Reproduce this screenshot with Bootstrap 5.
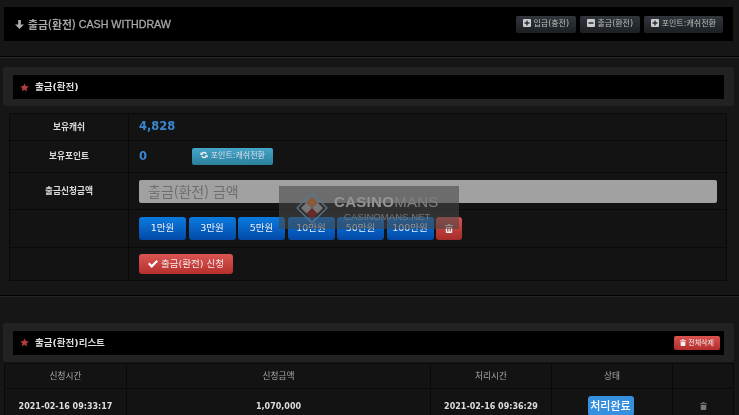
<!DOCTYPE html>
<html lang="ko">
<head>
<meta charset="utf-8">
<title>출금</title>
<link href="https://cdn.jsdelivr.net/npm/bootstrap@5.3.0/dist/css/bootstrap.min.css" rel="stylesheet">
<style>
html,body{height:415px;overflow:hidden}
body{background:#161616;color:#ddd;font-family:"DejaVu Sans","Noto Sans CJK KR",sans-serif;font-size:8px;font-weight:700;line-height:1.2}
.stage{position:relative;height:415px;overflow:hidden;padding-top:7px;filter:blur(.35px)}
.topbar{height:34px;margin:0 6px 0 4px;background:#000;color:#aaa;padding:0 10px 0 11px}
.toptitle{color:#a8a8a8}
.toptitle .ko{font:700 10.8px "Noto Sans CJK KR",sans-serif}
.toptitle .en{font:400 10.7px "Liberation Sans",sans-serif;-webkit-text-stroke:.3px #a8a8a8}
.gbtn{height:17px;padding:0;font-size:8px;color:#bdbdbd;border:0;border-radius:2px;background:linear-gradient(#30363c,#1c2024);white-space:nowrap}
.gw60{width:60px}.gw79{width:79px}
.rule1{height:2px;background:#000;margin-top:15px;border-bottom:1px solid #2a2a2a}
.panel{background:#222;border-radius:3px;padding:8px 10px;height:39px;margin:0 5px 0 3px}
.panelbar{background:#000;height:24px;padding:0 4px 0 7px;color:#ddd;font-size:9.5px}
.titlegap{gap:6px}
.mt-first{margin-top:9px}
.tbl1{width:718px;margin:7px 0 0 9px;border-collapse:collapse;background:#131313}
.tbl1 td{border:1px solid #0a0a0a;padding:0 0 0 10px;vertical-align:middle}
.tbl1 td:first-child{width:119px;padding:0;text-align:center;color:#ddd;font-size:8.7px}
.r1{height:27px}.r2{height:32px}.r3{height:37px}.r4{height:38px}.r5{height:33px}
.amt{color:#3a86cf;font-size:11.5px}
.refbtn{height:17px;width:81px;margin:-1px 0 0 45px;padding:0;color:#dde;font-size:8px;border:0;border-radius:2px;background:linear-gradient(#45a6c8,#2b7f9c)}
.amtinput{display:block;width:578px;height:23px;background:#a1a1a1;border:0;border-radius:2px;padding:0 9px;font:14px "Noto Sans CJK KR",sans-serif}
.amtinput::placeholder{color:#6e6e6e;opacity:1}
.mbtns{gap:2.5px}
.mbtn{width:47px;height:23px;padding:0;color:#f0f0f0;font-size:9.5px;font-weight:400;border:0;border-radius:3px;background:linear-gradient(#0b7be0,#0349a8)}
.tbtn{width:26px;height:23px;padding:0;border:0;border-radius:3px;background:linear-gradient(#d9534f,#a52c2a);color:#eee}
.rbtn{height:20px;width:94px;padding:0;color:#eee;font-size:9.5px;font-weight:400;border:0;border-radius:3px;background:linear-gradient(#dc5552,#b5302d)}
.rule2{height:2px;background:#000;margin-top:14px;border-bottom:1px solid #252525}
.panel2{margin-top:26px}
.delbtn{width:46px;height:14px;padding:0;color:#eee;font-size:7px;border:0;border-radius:2px;background:linear-gradient(#d9534f,#b52d2b)}
.tbl2{width:729px;margin:1px 0 0 4px;border-collapse:collapse;table-layout:fixed;background:#131313;text-align:center}
.tbl2 th,.tbl2 td{border:1px solid #0a0a0a;padding:0;vertical-align:middle}
.tbl2 th{height:25px;color:#aaa;font-size:8.7px;font-weight:400}
.tbl2 td{height:36px;color:#ddd;font-size:8px}
.cellbox{height:35px}
.donebadge{width:46px;height:20px;line-height:19px;background:#378fe0;color:#fff;font-size:11px;font-weight:500;font-family:"Noto Sans CJK KR",sans-serif;border-radius:3px;margin:7px 3px 0 0;align-self:flex-start}
.wmark{position:absolute;left:279px;top:186px;width:180px;height:43px;background:rgba(70,70,70,.58);pointer-events:none}
.wlogo{position:absolute;left:17px;top:6px}
.wname{position:absolute;left:55px;top:7px;font:700 15px "Liberation Sans",sans-serif;color:#949494;letter-spacing:.3px;white-space:nowrap}
.wname span{font-weight:400;color:#808080}
.wnet{position:absolute;left:65px;top:25px;font:400 9.6px "Liberation Sans",sans-serif;color:#757575;white-space:nowrap}
svg{vertical-align:-1px}
</style>
</head>
<body>
<div class="stage">
  <div class="topbar d-flex align-items-center justify-content-between">
    <div class="toptitle d-flex align-items-center">
      <svg class="me-1" width="9" height="9" viewBox="0 0 10 10"><path d="M3.500 0h3v5H10L5 10 0 5h3.500z" fill="#aaa"/></svg>
      <span class="ko">출금(환전)</span>&nbsp;<span class="en">CASH WITHDRAW</span>
    </div>
    <div class="d-flex gap-1">
      <button class="btn gbtn gw60"><svg width="8" height="8" viewBox="0 0 8 8"><path d="M1 0h6a1 1 0 0 1 1 1v6a1 1 0 0 1-1 1H1a1 1 0 0 1-1-1V1a1 1 0 0 1 1-1zm2.300 1.500v1.800H1.500v1.400h1.800v1.800h1.400V4.700h1.800V3.300H4.700V1.500z" fill="#ccc"/></svg> 입금(충전)</button>
      <button class="btn gbtn gw60"><svg width="8" height="8" viewBox="0 0 8 8"><path d="M1 0h6a1 1 0 0 1 1 1v6a1 1 0 0 1-1 1H1a1 1 0 0 1-1-1V1a1 1 0 0 1 1-1zm.5 3.300v1.400h5V3.300z" fill="#ccc"/></svg> 출금(환전)</button>
      <button class="btn gbtn gw79"><svg width="8" height="8" viewBox="0 0 8 8"><path d="M1 0h6a1 1 0 0 1 1 1v6a1 1 0 0 1-1 1H1a1 1 0 0 1-1-1V1a1 1 0 0 1 1-1zm2.300 1.500v1.800H1.500v1.400h1.800v1.800h1.400V4.700h1.800V3.300H4.700V1.500z" fill="#ccc"/></svg> 포인트:캐쉬전환</button>
    </div>
  </div>
  <div class="rule1"></div>
  <div class="panel mt-first">
    <div class="panelbar d-flex align-items-center titlegap">
      <svg width="9" height="9" viewBox="0 0 24 24"><path d="M12 1l3.400 7.300 7.900 1-5.800 5.500 1.500 7.900L12 17.800 5 21.700l1.500-7.900L.7 9.300l7.900-1z" fill="#b43c3c"/></svg>
      <span>출금(환전)</span>
    </div>
  </div>
  <table class="tbl1">
    <tr class="r1"><td>보유캐쉬</td><td><span class="amt">4,828</span></td></tr>
    <tr class="r2"><td>보유포인트</td><td><span class="amt">0</span><button class="btn refbtn"><svg width="8" height="8" viewBox="0 0 10 10"><path d="M8.600 3.500A4 4 0 0 0 1.700 2.600L.5 1.500V5h3.500L2.800 3.800a2.500 2.500 0 0 1 4.300 .4zM1.400 6.500A4 4 0 0 0 8.300 7.400L9.500 8.500V5H6l1.200 1.200a2.500 2.500 0 0 1-4.300-.4z" fill="#eee"/></svg> 포인트:캐쉬전환</button></td></tr>
    <tr class="r3"><td>출금신청금액</td><td><input class="amtinput" placeholder="출금(환전) 금액"></td></tr>
    <tr class="r4"><td></td><td><div class="d-flex align-items-center mbtns">
      <button class="btn mbtn">1만원</button><button class="btn mbtn">3만원</button><button class="btn mbtn">5만원</button><button class="btn mbtn">10만원</button><button class="btn mbtn">50만원</button><button class="btn mbtn">100만원</button>
      <button class="btn tbtn d-flex align-items-center justify-content-center"><svg width="8" height="9" viewBox="0 0 8 9"><path fill-rule="evenodd" d="M3 0h2l.4 1H8v1H0V1h2.600zM.8 3h6.400v5a1 1 0 0 1-1 1H1.800a1 1 0 0 1-1-1zM2 4v3.500h.8V4zm1.600 0v3.500h.8V4zm1.600 0v3.500H6V4z" fill="#eee"/></svg></button>
    </div></td></tr>
    <tr class="r5"><td></td><td><button class="btn rbtn"><svg width="10" height="8" viewBox="0 0 10 8"><path d="M0 4l1.500-1.500L3.700 4.700 8.500 0 10 1.500 3.700 8z" fill="#fff"/></svg> 출금(환전) 신청</button></td></tr>
  </table>
  <div class="rule2"></div>
  <div class="panel panel2">
    <div class="panelbar d-flex align-items-center justify-content-between">
      <div class="d-flex align-items-center titlegap">
        <svg width="9" height="9" viewBox="0 0 24 24"><path d="M12 1l3.400 7.300 7.900 1-5.800 5.500 1.500 7.900L12 17.800 5 21.700l1.500-7.900L.7 9.300l7.900-1z" fill="#b43c3c"/></svg>
        <span>출금(환전)리스트</span>
      </div>
      <button class="btn delbtn"><svg width="6" height="7" viewBox="0 0 8 9"><path d="M3 0h2l.4 1H8v1H0V1h2.600zM.8 3h6.400v5a1 1 0 0 1-1 1H1.800a1 1 0 0 1-1-1z" fill="#eee"/></svg> 전체삭제</button>
    </div>
  </div>
  <table class="tbl2">
    <colgroup><col style="width:122px"><col style="width:304px"><col style="width:121px"><col style="width:121px"><col style="width:61px"></colgroup>
    <tr><th>신청시간</th><th>신청금액</th><th>처리시간</th><th>상태</th><th></th></tr>
    <tr><td>2021-02-16 09:33:17</td><td>1,070,000</td><td>2021-02-16 09:36:29</td><td><div class="cellbox d-flex justify-content-center"><span class="donebadge">처리완료</span></div></td><td><svg width="7" height="8" viewBox="0 0 8 9"><path d="M3 0h2l.4 1H8v1H0V1h2.600zM.8 3h6.400v5a1 1 0 0 1-1 1H1.800a1 1 0 0 1-1-1z" fill="#777"/></svg></td></tr>
  </table>
  <div class="wmark">
    <svg class="wlogo" width="32" height="32" viewBox="0 0 32 32">
      <path d="M16 1l15 15-15 15L1 16z" fill="none" stroke="#5a7a90" stroke-width="1.200"/>
      <path d="M16 5l5.500 5.500L16 16l-5.500-5.500z" fill="#8a5a3a"/>
      <path d="M16 16l5.500 5.500L16 27l-5.500-5.500z" fill="#6a2a2a"/>
      <path d="M5 16l5.500-5.500L16 16l-5.500 5.500z" fill="#777"/>
      <path d="M16 16l5.500-5.500L27 16l-5.500 5.500z" fill="#777"/>
    </svg>
    <div class="wname">CASINO<span>MANS</span></div>
    <div class="wnet">CASINOMANS.NET</div>
  </div>
</div>
</body>
</html>
